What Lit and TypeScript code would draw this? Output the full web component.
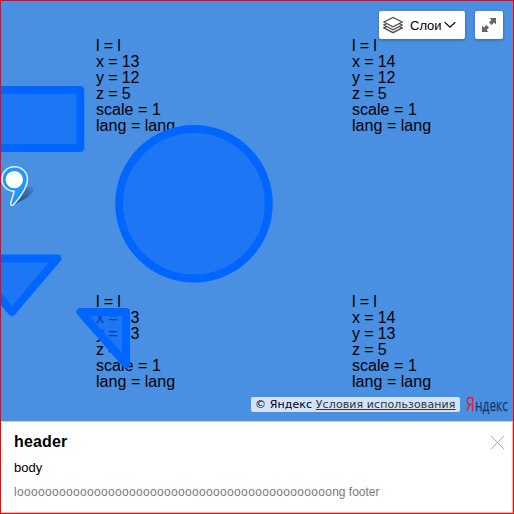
import { LitElement, html, css, svg } from "lit";
import { customElement } from "lit/decorators.js";

interface Tile { x: number; y: number; left: number; top: number }

const TILES: Tile[] = [
  { x: 13, y: 12, left: 95, top: 37 },
  { x: 14, y: 12, left: 351, top: 37 },
  { x: 13, y: 13, left: 95, top: 293 },
  { x: 14, y: 13, left: 351, top: 293 },
];

@customElement("app-root")
export class AppRoot extends LitElement {
  static styles = css`
    :host {
      display: block;
      box-sizing: border-box;
      width: 514px;
      height: 514px;
      border: 1px solid #f00;
      font-family: "Liberation Sans", Arial, sans-serif;
      color: #000;
      overflow: hidden;
    }
    .page { display: flex; flex-direction: column; height: 512px; }
    .map { position: relative; flex: 1; background: #4a90e2; overflow: hidden; }
    .tile {
      position: absolute;
      font-size: 16px;
      line-height: 16px;
      white-space: pre;
    }
    .top { letter-spacing: -0.2px; }
    .coords { letter-spacing: -0.15px; }
    .params { letter-spacing: 0.04px; }
    .shapes { position: absolute; inset: 0; display: block; }
    .controls {
      position: absolute;
      top: 10px;
      right: 10px;
      display: flex;
      gap: 10px;
    }
    .button {
      height: 28px;
      box-sizing: border-box;
      display: flex;
      align-items: center;
      background: #fff;
      border-radius: 2px;
      box-shadow: 0 1px 2px 1px rgba(0, 0, 0, 0.15), 0 2px 5px -3px rgba(0, 0, 0, 0.15);
      font-size: 13px;
    }
    .layers { width: 86px; padding-left: 4px; }
    .label { margin-left: 7px; width: 32px; }
    .arrow { margin-left: 2px; }
    .full { width: 28px; justify-content: center; }
    .copy {
      position: absolute;
      right: 4px;
      bottom: 6px;
      display: flex;
      align-items: center;
      gap: 6px;
    }
    .terms {
      box-sizing: border-box;
      width: 209px;
      height: 15px;
      margin-bottom: 2px;
      padding: 0 4px;
      border-radius: 2px;
      background: rgba(255, 255, 255, 0.75);
      font: 11px/15px "DejaVu Sans", Verdana, sans-serif;
      letter-spacing: 0.1px;
      white-space: nowrap;
    }
    .link { color: #333; text-decoration: underline; }
    .logo { display: block; overflow: visible; }
    .panel {
      box-sizing: border-box;
      height: 92px;
      border: 1px solid #ccc;
      border-left-color: #fff;
      background: #fff;
      display: flex;
      justify-content: space-between;
      padding: 11px 7px 0 12px;
    }
    .header { font-size: 16px; line-height: 18px; font-weight: bold; letter-spacing: 0.15px; }
    .body { font-size: 13px; line-height: 16px; margin-top: 9px; }
    .footer { font-size: 12px; line-height: 14px; margin-top: 9px; color: #7b7b7b; white-space: nowrap; }
    .long { letter-spacing: 0.33px; }
    .close { margin-top: 2px; }
  `;

  private tile(t: Tile) {
    const coords = `l = l\nx = ${t.x}\ny = ${t.y}\nz = 5\n`;
    return html`<div class="tile" style="left:${t.left}px;top:${t.top}px"><span class="coords">${coords}</span><span class="params">${"scale = 1\nlang = lang"}</span></div>`;
  }

  private shapes() {
    return svg`
      <g fill="#0066ff" fill-opacity="0.6" stroke="#0066ff" stroke-width="8" stroke-linejoin="round">
        <path d="M-40 90H80.3V148H-40Z"/>
        <circle cx="194" cy="203.7" r="74.8"/>
        <path d="M-33 258.5H57.5L12 312Z"/>
        <path d="M80.5 312H126V364Z"/>
      </g>
      <defs>
        <linearGradient id="shade" x1="14" y1="205" x2="34" y2="183" gradientUnits="userSpaceOnUse">
          <stop offset="0" stop-color="#14365f" stop-opacity=".85"/>
          <stop offset="1" stop-color="#14365f" stop-opacity=".05"/>
        </linearGradient>
      </defs>
      <path d="M13 205L25 188Q33 185 34 188Q34 193 25 199Z" fill="url(#shade)"/>
      <path d="M14.5 166.7C7.3 166.7 2 172 2 179.2C2 186.5 8 191.2 14.2 191.3C13 195.5 11.4 200 10.7 203.2C10.4 205.7 12.5 206 13.7 204.6C19 198.5 27.4 188.5 27.4 179.2C27.4 172 21.7 166.7 14.5 166.7Z"
        fill="#1e98ff" stroke="#e3effa" stroke-width="1.5"/>
      <circle cx="14.3" cy="179.6" r="8.7" fill="#fff"/>`;
  }

  render() {
    return html`
      <div class="page">
        <div class="map">
          ${TILES.map((t) => this.tile(t))}
          <svg class="shapes" width="512" height="420" viewBox="1 1 512 420">${this.shapes()}</svg>
          <div class="controls">
            <div class="button layers">
              <svg width="20" height="18" viewBox="0 0 20 18" fill="#fff" stroke="#4d4d4d" stroke-width="1.3">
                <path d="M.8 11.9L10 7.4L19.2 11.9L10 16.7Z"/>
                <path d="M.8 9L10 4.5L19.2 9L10 13.8Z"/>
                <path d="M.8 6L10 1.4L19.2 6L10 10.8Z"/>
              </svg>
              <span class="label">Слои</span>
              <svg class="arrow" width="12" height="8" viewBox="0 0 12 8" fill="none" stroke="#111" stroke-width="1.3">
                <path d="M.7 1.2L6 6.2L11.3 1.2"/>
              </svg>
            </div>
            <div class="button full">
              <svg width="14" height="14" viewBox="0 0 14 14" fill="#666">
                <path d="M7.6 0H14V6.4L12 4.6L9.6 7L7 4.4L9.4 2Z"/>
                <path d="M6.4 14H0V7.6L2 9.4L4.4 7L7 9.6L4.6 12Z"/>
              </svg>
            </div>
          </div>
          <div class="copy">
            <div class="terms">© Яндекс <span class="link">Условия использования</span></div>
            <svg class="logo" width="43" height="19" viewBox="0 0 43 19" font-family="Open Sans, sans-serif">
              <text transform="translate(0 15) scale(.7 1)" x="0" y="0" font-size="17" fill="#183965" stroke="#183965" stroke-width=".3"><tspan font-size="20.5" fill="#e61e3c" stroke="#e61e3c">Я</tspan><tspan>ндекс</tspan></text>
            </svg>
          </div>
        </div>
        <div class="panel">
          <div>
            <div class="header">header</div>
            <div class="body">body</div>
            <div class="footer"><span class="long">l${"o".repeat(45)}</span>ng footer</div>
          </div>
          <svg class="close" width="15" height="15" viewBox="0 0 15 15" stroke="#aaa" stroke-width="1">
            <path d="M.8 .8L14.2 14.2M14.2 .8L.8 14.2"/>
          </svg>
        </div>
      </div>`;
  }
}
